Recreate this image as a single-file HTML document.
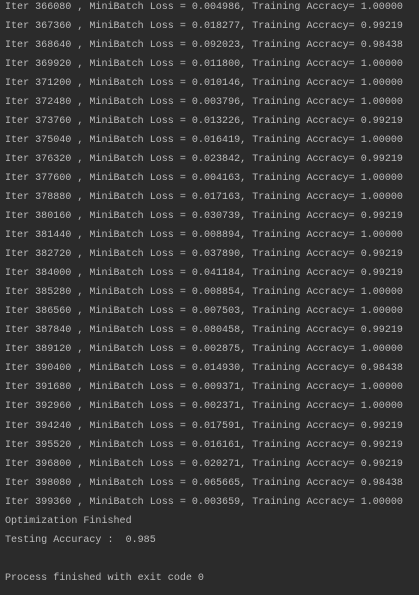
<!DOCTYPE html>
<html><head><style>
html,body{margin:0;padding:0;background:#2b2b2b;width:419px;height:595px;overflow:hidden}
pre{margin:0;position:absolute;left:5px;top:-2.5px;font-family:"Liberation Mono",monospace;font-size:10.05px;line-height:19.04px;color:#bbbbbb;white-space:pre}
</style></head><body><pre>Iter 366080 , MiniBatch Loss = 0.004986, Training Accracy= 1.00000
Iter 367360 , MiniBatch Loss = 0.018277, Training Accracy= 0.99219
Iter 368640 , MiniBatch Loss = 0.092023, Training Accracy= 0.98438
Iter 369920 , MiniBatch Loss = 0.011800, Training Accracy= 1.00000
Iter 371200 , MiniBatch Loss = 0.010146, Training Accracy= 1.00000
Iter 372480 , MiniBatch Loss = 0.003796, Training Accracy= 1.00000
Iter 373760 , MiniBatch Loss = 0.013226, Training Accracy= 0.99219
Iter 375040 , MiniBatch Loss = 0.016419, Training Accracy= 1.00000
Iter 376320 , MiniBatch Loss = 0.023842, Training Accracy= 0.99219
Iter 377600 , MiniBatch Loss = 0.004163, Training Accracy= 1.00000
Iter 378880 , MiniBatch Loss = 0.017163, Training Accracy= 1.00000
Iter 380160 , MiniBatch Loss = 0.030739, Training Accracy= 0.99219
Iter 381440 , MiniBatch Loss = 0.008894, Training Accracy= 1.00000
Iter 382720 , MiniBatch Loss = 0.037890, Training Accracy= 0.99219
Iter 384000 , MiniBatch Loss = 0.041184, Training Accracy= 0.99219
Iter 385280 , MiniBatch Loss = 0.008854, Training Accracy= 1.00000
Iter 386560 , MiniBatch Loss = 0.007503, Training Accracy= 1.00000
Iter 387840 , MiniBatch Loss = 0.080458, Training Accracy= 0.99219
Iter 389120 , MiniBatch Loss = 0.002875, Training Accracy= 1.00000
Iter 390400 , MiniBatch Loss = 0.014930, Training Accracy= 0.98438
Iter 391680 , MiniBatch Loss = 0.009371, Training Accracy= 1.00000
Iter 392960 , MiniBatch Loss = 0.002371, Training Accracy= 1.00000
Iter 394240 , MiniBatch Loss = 0.017591, Training Accracy= 0.99219
Iter 395520 , MiniBatch Loss = 0.016161, Training Accracy= 0.99219
Iter 396800 , MiniBatch Loss = 0.020271, Training Accracy= 0.99219
Iter 398080 , MiniBatch Loss = 0.065665, Training Accracy= 0.98438
Iter 399360 , MiniBatch Loss = 0.003659, Training Accracy= 1.00000
Optimization Finished
Testing Accuracy :  0.985

Process finished with exit code 0</pre></body></html>
